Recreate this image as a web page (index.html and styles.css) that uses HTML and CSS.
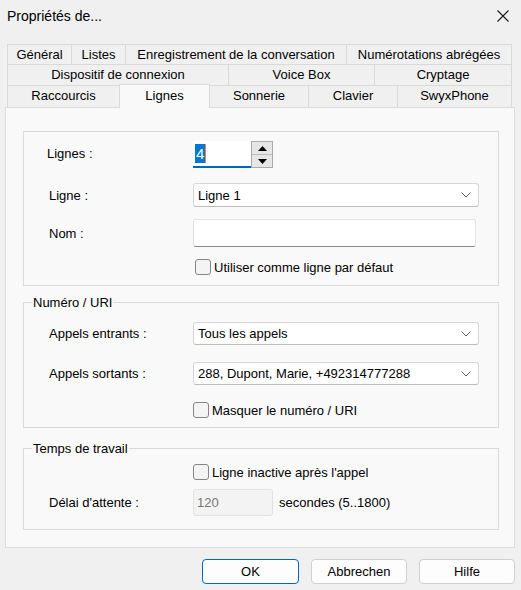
FILE: index.html
```html
<!DOCTYPE html>
<html lang="fr">
<head>
<meta charset="UTF-8">
<title>Propriétés de...</title>
<link rel="stylesheet" href="styles.css">
</head>
<body>

<div class="dialog">
    <div class="titlebar">
        <span class="title">Propriétés de...</span>
        <svg class="close" width="12" height="12" viewBox="0 0 12 12">
            <path d="M0.5 0.5 L11.5 11.5 M11.5 0.5 L0.5 11.5" stroke="#1a1a1a" stroke-width="1.1" fill="none"/>
        </svg>
    </div>

    <!-- Tab strip, three rows -->
    <div class="tabs">
        <div class="tab-row row-first">
            <div class="tab t-general">Général</div>
            <div class="tab t-listes">Listes</div>
            <div class="tab t-enreg">Enregistrement de la conversation</div>
            <div class="tab t-numab">Numérotations abrégées</div>
        </div>
        <div class="tab-row">
            <div class="tab t-dispo">Dispositif de connexion</div>
            <div class="tab t-voice">Voice Box</div>
            <div class="tab t-crypt">Cryptage</div>
        </div>
        <div class="tab-row row-last">
            <div class="tab t-racc">Raccourcis</div>
            <div class="tab t-lignes active">Lignes</div>
            <div class="tab t-sonn">Sonnerie</div>
            <div class="tab t-clav">Clavier</div>
            <div class="tab t-swyx">SwyxPhone</div>
        </div>
    </div>

    <div class="panel">
        <div class="group group-lines">
            <div class="field field-spin">
                <span class="label label-lignes">Lignes :</span>
                <div class="spin">
                    <div class="spin-input"><span class="sel">4</span></div>
                    <div class="spin-buttons">
                        <div class="spin-btn">
                            <svg width="9" height="5" viewBox="0 0 9 5"><polygon points="0,5 9,5 4.5,0" fill="#000"/></svg>
                        </div>
                        <div class="spin-btn">
                            <svg width="9" height="5" viewBox="0 0 9 5"><polygon points="0,0 9,0 4.5,5" fill="#000"/></svg>
                        </div>
                    </div>
                </div>
            </div>
            <div class="field field-line">
                <span class="label">Ligne :</span>
                <div class="select">
                    <span>Ligne 1</span>
                    <svg class="chevron" width="10" height="6" viewBox="0 0 10 6"><path d="M0.5 0.5 L5 5 L9.5 0.5" stroke="#5f5f5f" fill="none"/></svg>
                </div>
            </div>
            <div class="field field-name">
                <span class="label">Nom :</span>
                <div class="textbox"></div>
            </div>
            <div class="check check-default">
                <span class="box"></span>
                <span>Utiliser comme ligne par défaut</span>
            </div>
        </div>

        <div class="group group-number">
            <div class="group-title">Numéro / URI</div>
            <div class="field field-in">
                <span class="label">Appels entrants :</span>
                <div class="select">
                    <span>Tous les appels</span>
                    <svg class="chevron" width="10" height="6" viewBox="0 0 10 6"><path d="M0.5 0.5 L5 5 L9.5 0.5" stroke="#5f5f5f" fill="none"/></svg>
                </div>
            </div>
            <div class="field field-out">
                <span class="label">Appels sortants :</span>
                <div class="select">
                    <span>288, Dupont, Marie, +492314777288</span>
                    <svg class="chevron" width="10" height="6" viewBox="0 0 10 6"><path d="M0.5 0.5 L5 5 L9.5 0.5" stroke="#5f5f5f" fill="none"/></svg>
                </div>
            </div>
            <div class="check check-hide">
                <span class="box"></span>
                <span>Masquer le numéro / URI</span>
            </div>
        </div>

        <div class="group group-work">
            <div class="group-title">Temps de travail</div>
            <div class="check check-idle">
                <span class="box"></span>
                <span>Ligne inactive après l'appel</span>
            </div>
            <div class="field field-delay">
                <span class="label">Délai d'attente :</span>
                <div class="textbox disabled">120</div>
                <span class="unit">secondes (5..1800)</span>
            </div>
        </div>
    </div>

    <div class="buttons">
        <button class="btn btn-default">OK</button>
        <button class="btn">Abbrechen</button>
        <button class="btn">Hilfe</button>
    </div>
</div>

</body>
</html>
```

FILE: styles.css
```css
body {
    margin: 0;
    background-color: #f0f0f0;
    font-family: "Liberation Sans", Arial, sans-serif;
    font-size: 13px;
    color: #000;
}
.dialog {
    width: 521px;
    height: 590px;
}

/* Title bar */
.titlebar {
    height: 32px;
    display: flex;
    align-items: center;
    justify-content: space-between;
    padding: 0 12px 0 7px;
}
.title {
    font-size: 14px;
}

/* Tabs */
.tabs {
    margin: 12px 0 0 7px;
    width: 505px;
}
.tab-row {
    display: flex;
    height: 21px;
}
.tab {
    box-sizing: border-box;
    height: 21px;
    line-height: 20px;
    text-align: center;
    white-space: nowrap;
    border-right: 1px solid #d9d9d9;
    border-bottom: 1px solid #d9d9d9;
}
.tab:first-child {
    border-left: 1px solid #d9d9d9;
}
.row-first .tab {
    border-top: 1px solid #d9d9d9;
    line-height: 19px;
}
.row-last .tab {
    border-bottom: none;
}
.tab.active {
    position: relative;
    z-index: 1;
    height: 24px;
    margin-top: -2px;
    line-height: 21px;
    background-color: #f9f9f9;
    border-top: 1px solid #d9d9d9;
    border-left: 1px solid #d9d9d9;
    margin-left: -1px;
}
.t-general { width: 65px; }
.t-listes { width: 54px; }
.t-enreg { width: 221px; }
.t-numab { width: 165px; }
.t-dispo { width: 222px; }
.t-voice { width: 146px; }
.t-crypt { width: 137px; }
.t-racc { width: 113px; }
.t-lignes { width: 91px; }
.t-sonn { width: 99px; }
.t-clav { width: 89px; }
.t-swyx { width: 114px; }

/* Page body */
.panel {
    box-sizing: border-box;
    width: 510px;
    height: 441px;
    margin-left: 5px;
    padding: 23px 0 0 17px;
    background-color: #f9f9f9;
    border: 1px solid #dcdcdc;
}
.group {
    box-sizing: border-box;
    width: 476px;
    border: 1px solid #dadada;
}
.group-lines { height: 155px; }
.group-number { height: 126px; margin-top: 16px; }
.group-work { height: 82px; margin-top: 20px; }
.group-title {
    display: table;
    margin: -8px 0 0 8px;
    padding: 0 1px;
    line-height: 15px;
    height: 15px;
    background-color: #f9f9f9;
}

.field {
    display: flex;
    align-items: center;
    padding-left: 25px;
}
.label {
    width: 144px;
    flex: none;
}
.label-lignes {
    margin-left: -2px;
    margin-right: 2px;
    margin-top: -3px;
}

.field-spin { margin-top: 9px; height: 27px; }
.field-line { margin-top: 15px; height: 24px; }
.field-name { margin-top: 12px; height: 28px; }
.field-in { margin-top: 12px; height: 23px; }
.field-out { margin-top: 17px; height: 23px; }
.field-delay { margin-top: 9px; height: 27px; }

/* Up/down number box */
.spin {
    display: flex;
    height: 27px;
}
.spin-input {
    box-sizing: border-box;
    width: 58px;
    height: 27px;
    padding: 3px 0 0 2px;
    background-color: #fff;
    border-bottom: 2px solid #0067c0;
    font-size: 15px;
}
.sel {
    display: inline-block;
    line-height: 19px;
    padding: 0 1px;
    background-color: #0078d7;
    color: #fff;
    border-right: 1px solid #e8823a;
}
.spin-buttons {
    box-sizing: border-box;
    width: 22px;
    height: 27px;
    border: 1px solid #aaaaaa;
    display: flex;
    flex-direction: column;
    gap: 1px;
    background-color: #bdbdbd;
}
.spin-btn {
    flex: 1;
    display: flex;
    align-items: center;
    justify-content: center;
    background-color: #e6e6e6;
}

/* Combo boxes and text boxes */
.select {
    box-sizing: border-box;
    width: 286px;
    height: 100%;
    display: flex;
    align-items: center;
    justify-content: space-between;
    padding: 0 7px 0 4px;
    background-color: #fff;
    border: 1px solid #d6d6d6;
    border-bottom-color: #bcbcbc;
    border-radius: 3px;
}
.textbox {
    box-sizing: border-box;
    width: 283px;
    height: 100%;
    background-color: #fff;
    border: 1px solid #e3e3e3;
    border-bottom: 1px solid #8a8a8a;
    border-radius: 3px;
}
.textbox.disabled {
    width: 80px;
    padding: 5px 0 0 3px;
    background-color: #f3f3f3;
    border: 1px solid #e2e2e2;
    color: #777;
}
.unit {
    margin-left: 6px;
}

/* Check boxes */
.check {
    display: flex;
    align-items: center;
    gap: 3px;
    height: 16px;
    padding-left: 169px;
}
.check-default { margin-top: 12px; padding-left: 171px; }
.check-hide { margin-top: 17px; }
.check-idle { margin-top: 8px; }
.box {
    box-sizing: border-box;
    width: 16px;
    height: 16px;
    border: 1px solid #858585;
    border-radius: 3px;
    background-color: #f4f4f4;
}

/* Dialog buttons */
.buttons {
    display: flex;
    justify-content: flex-end;
    gap: 12px;
    margin-top: 11px;
    padding-right: 6px;
}
.btn {
    box-sizing: border-box;
    width: 96px;
    height: 25px;
    font-family: "Liberation Sans", Arial, sans-serif;
    font-size: 13px;
    color: #000;
    background-color: #fdfdfd;
    border: 1px solid #d0d0d0;
    border-radius: 4px;
}
.btn-default {
    width: 97px;
    border-color: #0067c0;
}
```
